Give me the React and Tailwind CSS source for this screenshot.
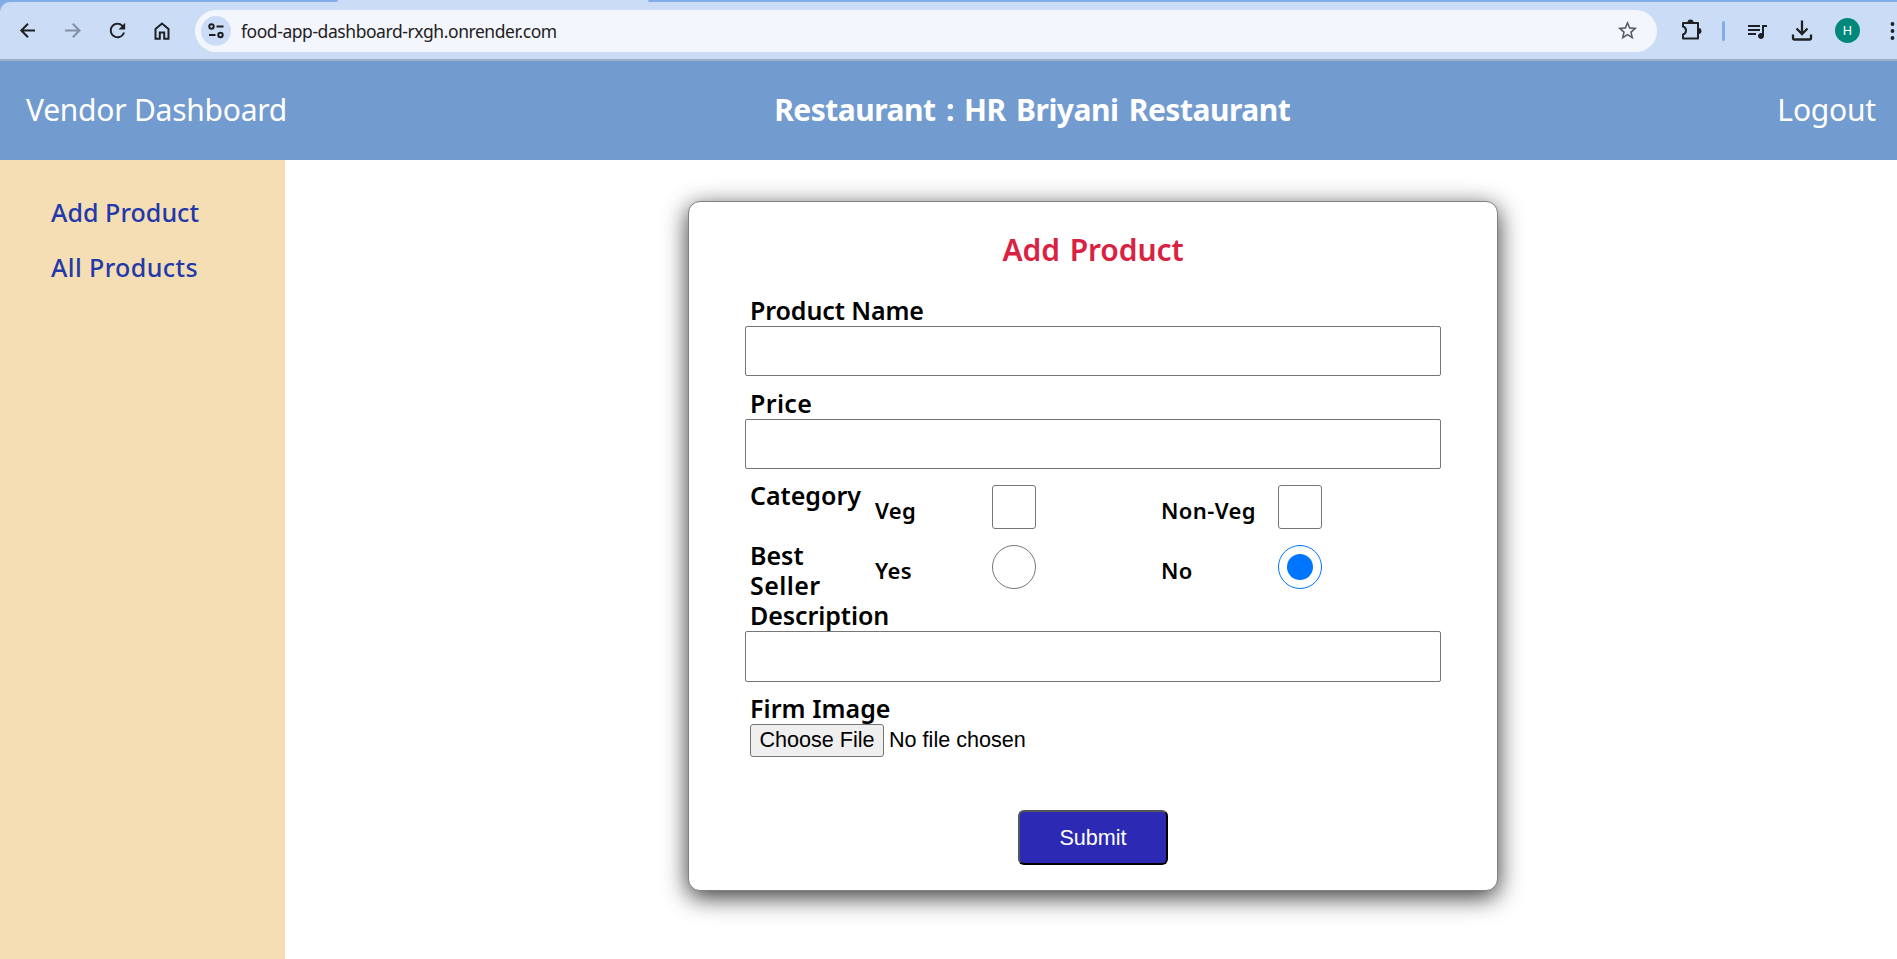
import React from "react";
import { MdRefresh, MdQueueMusic, MdStarBorder } from "react-icons/md";

const ICON = "fill-none stroke-[#1f2023] stroke-2";

function Field({ label, className, labelClass, inputClass }) {
  return (
    <div className={"flex flex-col " + className}>
      <label className={"ml-[5px] h-[30px] text-[25px] leading-[28px] font-semibold " + labelClass}>{label}</label>
      <input className={"w-[696px] rounded-[2px] border border-[#767676] bg-white px-3 text-[22px] outline-none " + inputClass} />
    </div>
  );
}

function Toolbar() {
  return (
    <div className="flex h-[61px] shrink-0 flex-col border-b-2 border-[#9fb0cb] bg-[#82ade9]">
      <div className="flex h-[2px] shrink-0 justify-between bg-[#cbdcf6]">
        <div className="w-[338px] rounded-br-[2px] bg-[#82ade9]" />
        <div className="w-[1249px] rounded-bl-[2px] bg-[#82ade9]" />
      </div>
      <div className="flex h-[57px] items-center rounded-tl-[10px] bg-[#cbdcf6]">
        <svg className={"ml-[18px] size-[20px] " + ICON} viewBox="0 0 20 20"><path d="M17 9.500H3.500M10 2.800L3.300 9.500l6.700 6.700" /></svg>
        <svg className="ml-[25px] size-[20px] fill-none stroke-[#8390a4] stroke-2" viewBox="0 0 20 20"><path d="M2 9.500h14M9.800 2.800l6.700 6.700-6.700 6.700" /></svg>
        <MdRefresh className="ml-[23px] size-[23px] text-[#1f2023]" />
        <svg className={"ml-[23px] size-[20px] " + ICON} viewBox="0 0 20 20"><path d="M3.500 8L10 2.500 16.500 8v9.800h-4.300v-6.300H7.800v6.300H3.500z" /></svg>
        <div className="ml-[23px] flex h-[42px] w-[1462px] items-center rounded-full bg-[#f3f7fd] pr-[18px] pl-[6px]">
          <div className="flex size-[30px] items-center justify-center rounded-full bg-[#cbdcf6]">
            <svg className={"size-[18px] " + ICON} viewBox="0 0 18 18"><circle cx="4.500" cy="4.500" r="2.200" /><path d="M9.500 4.500H16.500M2 13H8.500" /><circle cx="13.500" cy="13" r="2.200" /></svg>
          </div>
          <span className="ml-[10px] pt-[2px] font-['Noto_Sans',sans-serif] text-[17.500px] tracking-[-0.440px] text-[#1f2023]">food-app-dashboard-rxgh.onrender.com</span>
          <MdStarBorder className="ml-auto size-[23px] text-[#55585d]" />
        </div>
        <svg className="ml-[23px] size-[23px]" viewBox="0 0 23 23"><path className="fill-none stroke-[#1f2023] stroke-2" strokeLinejoin="round" d="M3 4h15v15.500H3v-4c4-1 4-7 0-8z" /><path className="fill-[#1f2023]" d="M7.500 3.500a3 3 0 0 1 6 0zM18.500 9a3 3 0 0 1 0 6z" /></svg>
        <div className="ml-[19px] h-[20px] w-[3px] rounded-full bg-[#82ade9]" />
        <MdQueueMusic className="ml-[20px] size-[24px] text-[#1f2023]" />
        <svg className="ml-[22px] size-[22px] fill-none stroke-[#1f2023] stroke-[2.300]" viewBox="0 0 22 22"><path d="M11 .5v13M5.500 8.500l5.500 5.500 5.500-5.500M2 14.500v3.500q0 1.500 1.500 1.500h15q1.500 0 1.500-1.500v-3.500" /></svg>
        <div className="ml-[22px] flex size-[25px] items-center justify-center rounded-full bg-[#00897b] font-['Roboto',sans-serif] text-[13px] text-white">H</div>
        <svg className="ml-[30px] h-[20px] w-[5px] fill-[#1f2023]" viewBox="0 0 5 20"><circle cx="2.500" cy="3" r="1.900" /><circle cx="2.500" cy="10" r="1.900" /><circle cx="2.500" cy="17" r="1.900" /></svg>
      </div>
    </div>
  );
}

function Choice({ label, className, children }) {
  return (
    <label className={"flex h-[44px] items-start " + className}>
      <span className="w-[117px] pt-[10px] text-[22px] leading-[30px] font-semibold tracking-[0.400px]">{label}</span>
      {children}
    </label>
  );
}

export default function App() {
  return (
    <div className="flex h-[959px] w-[1897px] flex-col overflow-hidden bg-white font-['Noto_Sans',sans-serif] text-black">
      <Toolbar />
      <header className="flex h-[99px] shrink-0 items-center justify-between bg-[#729bcf] pr-[21px] pb-[2px] pl-[26px] text-[30px] text-white">
        <span className="tracking-[-0.250px]">Vendor Dashboard</span>
        <span className="font-bold tracking-[-0.500px] [word-spacing:3px]">Restaurant : HR Briyani Restaurant</span>
        <span className="tracking-[-0.200px]">Logout</span>
      </header>
      <div className="flex flex-1">
        <nav className="flex w-[285px] flex-col gap-[25px] bg-[#f5deb3] pt-[37px] pl-[51px] text-[25px] leading-[30px] font-medium text-[#2238ab]">
          <a className="tracking-[0.050px]">Add Product</a>
          <a className="tracking-[0.400px]">All Products</a>
        </nav>
        <main className="flex flex-1 justify-center pt-[41px] pl-[4px]">
          <form className="flex h-[690px] w-[810px] flex-col rounded-[12px] border border-[#808080] bg-white px-[56px] shadow-[0_6px_25px_rgba(0,0,0,0.8)]">
            <h3 className="mt-[30px] text-center text-[30px] leading-[36px] font-semibold tracking-[-0.100px] text-[#d9223f] [word-spacing:2px]">Add Product</h3>
            <Field label="Product Name" className="mt-[28px]" labelClass="tracking-[-0.100px]" inputClass="h-[50px]" />
            <Field label="Price" className="mt-[13px]" labelClass="tracking-[0.350px]" inputClass="h-[50px]" />
            <div className="mt-[12px] flex h-[60px] pl-[5px]">
              <span className="w-[125px] text-[25px] leading-[29px] font-semibold">Category</span>
              <Choice label="Veg" className="mt-[4px] w-[286px]">
                <span className="size-[44px] rounded-[3px] border border-[#767676]" />
              </Choice>
              <Choice label="Non-Veg" className="mt-[4px]">
                <span className="size-[44px] rounded-[3px] border border-[#767676]" />
              </Choice>
            </div>
            <div className="flex h-[60px] pl-[5px]">
              <span className="flex w-[125px] flex-col text-[25px] leading-[29px] font-semibold">
                <span className="h-[30px]">Best</span>
                <span className="h-[30px] tracking-[0.400px]">Seller</span>
              </span>
              <Choice label="Yes" className="mt-[4px] w-[286px]">
                <span className="size-[44px] rounded-full border border-[#767676]" />
              </Choice>
              <Choice label="No" className="mt-[4px]">
                <span className="flex size-[44px] items-center justify-center rounded-full border border-[#0075ff]">
                  <span className="size-[26px] rounded-full bg-[#0075ff]" />
                </span>
              </Choice>
            </div>
            <Field label="Description" labelClass="tracking-[-0.080px]" inputClass="h-[51px]" />
            <div className="mt-[12px] flex flex-col items-start pl-[5px]">
              <label className="h-[30px] text-[25px] leading-[28px] font-semibold tracking-[0.050px]">Firm Image</label>
              <div className="flex items-start font-['Liberation_Sans',sans-serif] text-[21.600px] leading-[31px]">
                <button type="button" className="h-[33px] w-[134px] rounded-[3px] border border-[#767676] bg-[#efefef] pb-[2px] leading-[28px]">Choose File</button>
                <span className="ml-[5px]">No file chosen</span>
              </div>
            </div>
            <button type="button" className="mt-[53px] h-[55px] w-[150px] self-center rounded-[6px] border-2 border-t-[#555] border-r-black border-b-black border-l-[#555] bg-[#2c2ab4] pt-[1px] font-['Liberation_Sans',sans-serif] text-[21.600px] text-white">Submit</button>
          </form>
        </main>
      </div>
    </div>
  );
}
